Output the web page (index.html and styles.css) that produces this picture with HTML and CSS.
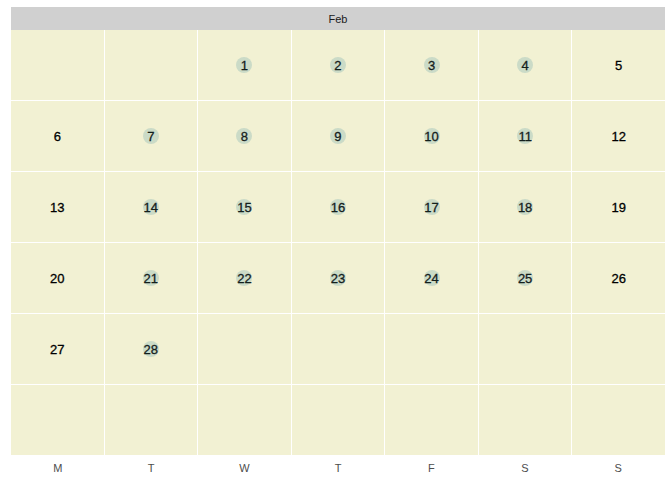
FILE: index.html
```html
<!DOCTYPE html>
<html>
<head>
<meta charset="utf-8">
<link rel="stylesheet" href="styles.css">
</head>
<body>
<div class="cal">
  <div class="strip">Feb</div>
  <div class="grid">
    <div class="cell"></div><div class="cell"></div>
    <div class="cell"><span class="num hl">1</span></div>
    <div class="cell"><span class="num hl">2</span></div>
    <div class="cell"><span class="num hl">3</span></div>
    <div class="cell"><span class="num hl">4</span></div>
    <div class="cell"><span class="num">5</span></div>
    <div class="cell"><span class="num">6</span></div>
    <div class="cell"><span class="num hl">7</span></div>
    <div class="cell"><span class="num hl">8</span></div>
    <div class="cell"><span class="num hl">9</span></div>
    <div class="cell"><span class="num hl">10</span></div>
    <div class="cell"><span class="num hl">11</span></div>
    <div class="cell"><span class="num">12</span></div>
    <div class="cell"><span class="num">13</span></div>
    <div class="cell"><span class="num hl">14</span></div>
    <div class="cell"><span class="num hl">15</span></div>
    <div class="cell"><span class="num hl">16</span></div>
    <div class="cell"><span class="num hl">17</span></div>
    <div class="cell"><span class="num hl">18</span></div>
    <div class="cell"><span class="num">19</span></div>
    <div class="cell"><span class="num">20</span></div>
    <div class="cell"><span class="num hl">21</span></div>
    <div class="cell"><span class="num hl">22</span></div>
    <div class="cell"><span class="num hl">23</span></div>
    <div class="cell"><span class="num hl">24</span></div>
    <div class="cell"><span class="num hl">25</span></div>
    <div class="cell"><span class="num">26</span></div>
    <div class="cell"><span class="num">27</span></div>
    <div class="cell"><span class="num hl">28</span></div>
    <div class="cell"></div><div class="cell"></div><div class="cell"></div><div class="cell"></div><div class="cell"></div>
    <div class="cell"></div><div class="cell"></div><div class="cell"></div><div class="cell"></div><div class="cell"></div><div class="cell"></div><div class="cell"></div>
  </div>
  <div class="days">
    <span>M</span><span>T</span><span>W</span><span>T</span><span>F</span><span>S</span><span>S</span>
  </div>
</div>
</body>
</html>
```
FILE: styles.css
```css
html, body {
  margin: 0;
  padding: 0;
  background: #ffffff;
}
body {
  font-family: "Liberation Sans", Arial, sans-serif;
}
.cal {
  width: 654px;
  padding: 7px 0 0 11px;
}
.strip {
  height: 23px;
  background: #d0d0d0;
  color: #1a1a1a;
  font-size: 11px;
  display: flex;
  align-items: center;
  justify-content: center;
}
.grid {
  display: grid;
  grid-template-columns: repeat(7, 1fr);
  grid-template-rows: repeat(6, 1fr);
  gap: 1px;
  height: 425px;
  background: #ffffff;
}
.cell {
  background: #f2f1d3;
  display: flex;
  align-items: center;
  justify-content: center;
}
.num {
  font-size: 13px;
  color: #000000;
  -webkit-text-stroke: 0.3px #000000;
  width: 16px;
  height: 16px;
  display: flex;
  align-items: center;
  justify-content: center;
  border-radius: 50%;
}
.num.hl {
  background: #cbdbc7;
  color: #14201c;
  -webkit-text-stroke: 0.3px #14201c;
}
.days {
  display: grid;
  grid-template-columns: repeat(7, 1fr);
  height: 25px;
  align-items: center;
  justify-items: center;
  color: #4d4d4d;
  font-size: 11px;
}
```
